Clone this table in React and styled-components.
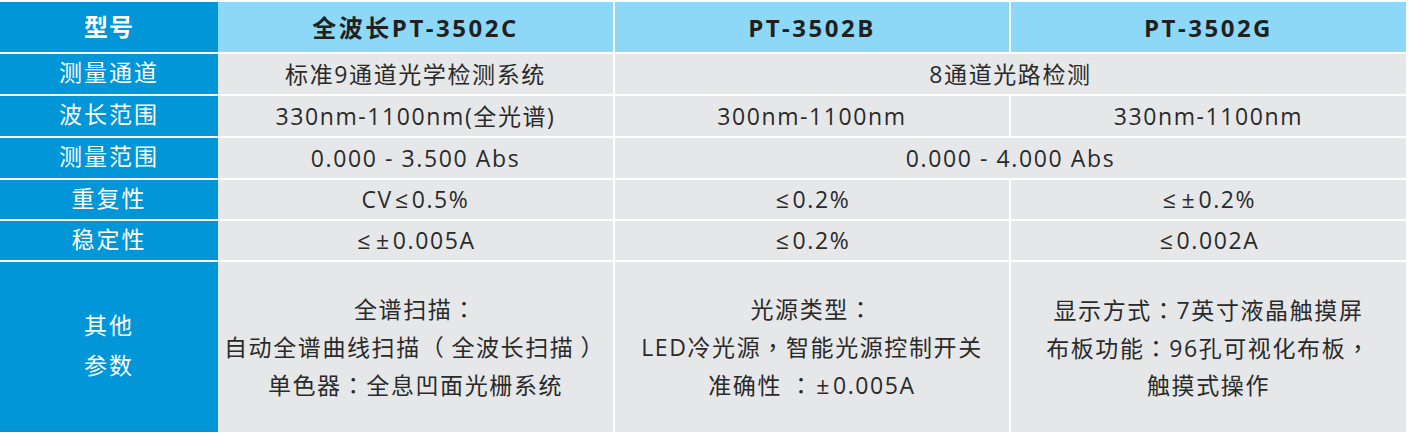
import React from "react";
import styled, { createGlobalStyle } from "styled-components";

const Global = createGlobalStyle`
  html, body { margin: 0; padding: 0; background: #ffffff; }
  body { padding-top: 2px; font-family: "Open Sans", "Noto Sans CJK SC", sans-serif; }
`;

const Table = styled.div`
  display: grid;
  width: 1406px;
  grid-template-columns: 218px 395px 396px 397px;
  grid-template-rows: 50px 40px 40px 40px 39px 39px 170px;
  row-gap: 2px;
  background: #ffffff;
`;

const Cell = styled.div`
  box-sizing: border-box;
  display: flex;
  flex-direction: column;
  align-items: center;
  justify-content: center;
  text-align: center;
  grid-column: ${(p) => p.$span || "auto"};
  border-left: ${(p) => (p.$split ? "2px solid #ffffff" : "none")};
  background: #e6e7e9;
  color: #2a2a2a;
  font-size: 23px;
  letter-spacing: 1.6px;
  line-height: 37px;
  white-space: nowrap;
`;

const LabelCell = styled(Cell)`
  background: #0096d8;
  color: #ffffff;
  line-height: 40px;
  letter-spacing: 2px;
  padding-bottom: 4px;
`;

const HeadLabel = styled(LabelCell)`
  font-weight: 700;
  font-size: 24px;
  letter-spacing: 1px;
  padding-bottom: 0;
`;

const HeadCell = styled(Cell)`
  background: #8dd8f7;
  color: #231f20;
  font-weight: 700;
  font-size: 24px;
  letter-spacing: 2.5px;
`;

const Punct = styled.span`
  font-family: "Noto Sans CJK TC", sans-serif;
  padding: ${(p) => p.$pad || "0"};
`;

const Sym = styled.span`
  padding: 0 2px 0 ${(p) => (p.$lead ? "4px" : "2px")};
`;

const rows = [
  { label: "测量通道", cells: [{ t: "标准9通道光学检测系统" }, { t: "8通道光路检测", span: "3 / 5" }] },
  { label: "波长范围", cells: [{ t: "330nm-1100nm(全光谱)" }, { t: "300nm-1100nm" }, { t: "330nm-1100nm" }] },
  { label: "测量范围", cells: [{ t: "0.000 - 3.500 Abs" }, { t: "0.000 - 4.000 Abs", span: "3 / 5" }] },
  { label: "重复性", cells: [{ t: "CV≤0.5%" }, { t: "≤0.2%" }, { t: "≤±0.2%" }] },
  { label: "稳定性", cells: [{ t: "≤±0.005A" }, { t: "≤0.2%" }, { t: "≤0.002A" }] },
];

const other = [
  ["全谱扫描：", "自动全谱曲线扫描（全波长扫描）", "单色器：全息凹面光栅系统"],
  ["光源类型：", "LED冷光源，智能光源控制开关", "准确性 ：±0.005A"],
  ["显示方式：7英寸液晶触摸屏", "布板功能：96孔可视化布板，", "触摸式操作"],
];

const punctPad = { "：": "0", "，": "0", "（": "0 6px 0 0", "）": "0 2px 0 6px" };

function Line({ text }) {
  const parts = text.split(/([：，（）≤±])/);
  return (
    <span>
      {parts.map((p, i) => {
        if (p in punctPad) return <Punct key={i} $pad={punctPad[p]}>{p}</Punct>;
        if (/^[≤±]$/.test(p)) return <Sym key={i} $lead={p === "≤" && i > 1}>{p}</Sym>;
        return <React.Fragment key={i}>{p}</React.Fragment>;
      })}
    </span>
  );
}

export default function App() {
  return (
    <>
      <Global />
      <Table>
        <HeadLabel>型号</HeadLabel>
        <HeadCell>全波长PT-3502C</HeadCell>
        <HeadCell $split>PT-3502B</HeadCell>
        <HeadCell $split>PT-3502G</HeadCell>
        {rows.map((r) => (
          <React.Fragment key={r.label}>
            <LabelCell>{r.label}</LabelCell>
            {r.cells.map((c, i) => (
              <Cell key={i} $split={i > 0} $span={c.span}>
                <Line text={c.t} />
              </Cell>
            ))}
          </React.Fragment>
        ))}
        <LabelCell>
          <span>其他</span>
          <span>参数</span>
        </LabelCell>
        {other.map((lines, i) => (
          <Cell key={i} $split={i > 0}>
            {lines.map((l) => (
              <Line key={l} text={l} />
            ))}
          </Cell>
        ))}
      </Table>
    </>
  );
}
